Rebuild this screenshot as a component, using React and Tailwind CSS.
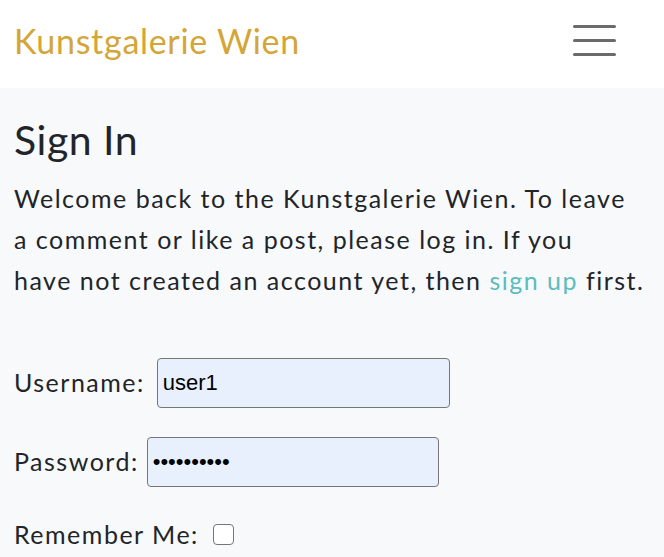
export default function App() {
  return (
    <div className="min-h-[557px] bg-[#f8f9fa] text-[#212529]" style={{ fontFamily: "Lato, 'Noto Sans', sans-serif" }}>
      {/* Navbar */}
      <nav className="h-[88px] bg-white flex items-center justify-between pl-[14px] pr-[48px] pb-[7px]">
        <a href="#" className="text-[#d4a537] text-[34px] leading-none tracking-[0.7px]">Kunstgalerie Wien</a>
        <button className="flex flex-col gap-[11px] w-[43px]" aria-label="menu">
          <span className="block h-[3px] w-full bg-[#6b6b6b] rounded-full"></span>
          <span className="block h-[3px] w-full bg-[#6b6b6b] rounded-full"></span>
          <span className="block h-[3px] w-full bg-[#6b6b6b] rounded-full"></span>
        </button>
      </nav>

      {/* Content */}
      <main className="px-[14px] pt-[28px] tracking-[1.5px]">
        <h2 className="text-[41px] leading-[48px] font-normal tracking-[0.5px]">Sign In</h2>
        <p className="mt-[14px] text-[25px] leading-[41px] whitespace-nowrap">
          Welcome back to the Kunstgalerie Wien. To leave
          <br />
          a comment or like a post, please log in. If you
          <br />
          have not created an account yet, then{" "}
          <a href="#" className="text-[#5bbcbf]">sign up</a> first.
        </p>

        <form className="mt-[57px] text-[25px]">
          <div className="flex items-center gap-[12px]">
            <label htmlFor="username">Username:</label>
            <input
              id="username"
              defaultValue="user1"
              className="w-[293px] h-[50px] bg-[#e8f0fe] border border-[#767676] rounded-[4px] px-[5px] text-[22px] text-black tracking-normal"
              style={{ fontFamily: "'Liberation Sans', Arial, sans-serif" }}
            />
          </div>
          <div className="flex items-center gap-[8px] mt-[29px]">
            <label htmlFor="password">Password:</label>
            <input
              id="password"
              type="password"
              defaultValue="password12"
              className="w-[292px] h-[50px] bg-[#e8f0fe] border border-[#767676] rounded-[4px] px-[5px] text-[22px] text-black tracking-normal"
              style={{ fontFamily: "'Liberation Sans', Arial, sans-serif" }}
            />
          </div>
          <div className="flex items-center gap-[14px] mt-[29px]">
            <label htmlFor="remember">Remember Me:</label>
            <input
              id="remember"
              type="checkbox"
              className="appearance-none w-[21px] h-[21px] bg-white border border-[#767676] rounded-[4px]"
            />
          </div>
        </form>
      </main>
    </div>
  );
}
